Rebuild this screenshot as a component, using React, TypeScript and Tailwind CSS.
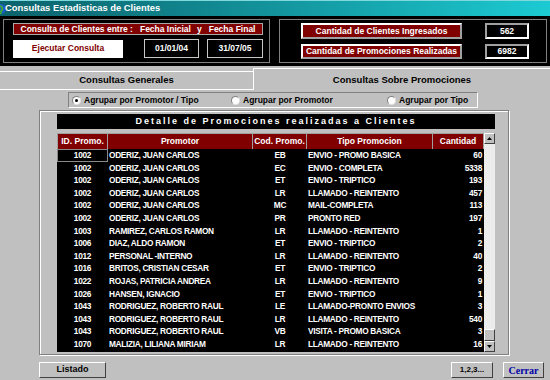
import React from 'react'

const rows: [string, string, string, string, string][] = [
  ['1002', 'ODERIZ, JUAN CARLOS', 'EB', 'ENVIO - PROMO BASICA', '60'],
  ['1002', 'ODERIZ, JUAN CARLOS', 'EC', 'ENVIO - COMPLETA', '5338'],
  ['1002', 'ODERIZ, JUAN CARLOS', 'ET', 'ENVIO - TRIPTICO', '193'],
  ['1002', 'ODERIZ, JUAN CARLOS', 'LR', 'LLAMADO - REINTENTO', '457'],
  ['1002', 'ODERIZ, JUAN CARLOS', 'MC', 'MAIL-COMPLETA', '113'],
  ['1002', 'ODERIZ, JUAN CARLOS', 'PR', 'PRONTO RED', '197'],
  ['1003', 'RAMIREZ, CARLOS RAMON', 'LR', 'LLAMADO - REINTENTO', '1'],
  ['1006', 'DIAZ, ALDO RAMON', 'ET', 'ENVIO - TRIPTICO', '2'],
  ['1012', 'PERSONAL -INTERNO', 'LR', 'LLAMADO - REINTENTO', '40'],
  ['1016', 'BRITOS, CRISTIAN CESAR', 'ET', 'ENVIO - TRIPTICO', '2'],
  ['1022', 'ROJAS, PATRICIA ANDREA', 'LR', 'LLAMADO - REINTENTO', '9'],
  ['1026', 'HANSEN, IGNACIO', 'ET', 'ENVIO - TRIPTICO', '1'],
  ['1043', 'RODRIGUEZ, ROBERTO RAUL', 'LE', 'LLAMADO-PRONTO ENVIOS', '3'],
  ['1043', 'RODRIGUEZ, ROBERTO RAUL', 'LR', 'LLAMADO - REINTENTO', '540'],
  ['1043', 'RODRIGUEZ, ROBERTO RAUL', 'VB', 'VISITA - PROMO BASICA', '3'],
  ['1070', 'MALIZIA, LILIANA MIRIAM', 'LR', 'LLAMADO - REINTENTO', '16'],
]

// column widths + alignment, written out so tailwind picks them up
const cols = [
  'w-[51px] justify-center',
  'w-[145px] justify-start pl-[1px]',
  'w-[54px] justify-center',
  'w-[126px] justify-start pl-[1px]',
  'w-[51px] justify-end pr-[2px]',
]
const headW = ['w-[51px]', 'w-[145px]', 'w-[54px]', 'w-[126px]', 'w-[51px]']

const headers = ['ID. Promo.', 'Promotor', 'Cod. Promo.', 'Tipo Promocion', 'Cantidad']

const raised =
  'border border-t-white border-l-white border-r-[#404040] border-b-[#404040] bg-[#c0c0c0]'

function Radio({ label, checked, width }: { label: string; checked?: boolean; width: string }) {
  return (
    <div className={`flex items-center gap-[3px] whitespace-nowrap ${width}`}>
      <span className="w-[9px] h-[9px] shrink-0 rounded-full bg-white border border-t-[#808080] border-l-[#808080] border-b-[#e0e0e0] border-r-[#e0e0e0] flex items-center justify-center">
        {checked && <span className="w-[3px] h-[3px] rounded-full bg-black" />}
      </span>
      <span className="text-[8.5px] font-bold text-black">{label}</span>
    </div>
  )
}

function Arrow({ up }: { up?: boolean }) {
  return (
    <div className={`h-[11px] flex items-center justify-center ${raised}`}>
      <svg width="5" height="3" viewBox="0 0 5 3">
        <path d={up ? 'M0 3 L2.5 0 L5 3 Z' : 'M0 0 L2.5 3 L5 0 Z'} fill="#000" />
      </svg>
    </div>
  )
}

export default function App() {
  return (
    <div className="w-[550px] h-[380px] overflow-hidden bg-[#c0c0c0] font-['Liberation_Sans',Arial,sans-serif] flex flex-col">
      {/* Title bar */}
      <div className="h-[16px] flex items-center bg-gradient-to-r from-[#0b626b] to-[#1ccad2] border-t border-[#7fd8dc]">
        <svg width="6" height="12" viewBox="0 0 6 12" className="shrink-0">
          <circle cx="1" cy="6" r="5" fill="#1c5bc8" />
          <path d="M0 3 Q3 4 2 7 Q0 9 1 11" stroke="#39a83a" strokeWidth="2" fill="none" />
        </svg>
        <span className="ml-[-1px] text-white font-bold text-[9.4px]">Consultas Estadisticas de Clientes</span>
      </div>

      {/* Black header */}
      <div className="h-[50px] bg-black flex pt-[3px] px-[3px] gap-[9px]">
        <div className="w-[267px] h-[44px] border border-[#808080] pl-[9px] pt-[3px]">
          <div className="w-[250px] h-[12px] bg-[#800000] border border-[#a8a8a8] flex items-center justify-center text-white font-bold text-[8.5px] whitespace-pre">
            <span>Consulta de Clientes entre :</span>
            <span className="ml-[7px]">Fecha Inicial</span>
            <span className="ml-[6px]">y</span>
            <span className="ml-[7px]">Fecha Final</span>
          </div>
          <div className="mt-[4px] flex items-center">
            <div className="w-[110px] h-[18px] bg-white flex items-center justify-center text-[#800000] font-bold text-[8.5px]">
              Ejecutar Consulta
            </div>
            <div className="ml-[21px] w-[55px] h-[19px] border border-[#c8c8c8] flex items-center justify-center text-white font-bold text-[8.5px]">
              01/01/04
            </div>
            <div className="ml-[8px] w-[56px] h-[19px] border border-[#c8c8c8] flex items-center justify-center text-white font-bold text-[8.5px]">
              31/07/05
            </div>
          </div>
        </div>
        <div className="w-[268px] h-[44px] border border-[#808080] pl-[21px] pt-[3px]">
          <div className="flex">
            <div className="w-[161px] h-[16px] bg-[#800000] border-2 border-t-white border-l-white border-b-[#a0a0a0] border-r-[#a0a0a0] flex items-center justify-center text-white font-bold text-[8.5px]">
              Cantidad de Clientes Ingresados
            </div>
            <div className="ml-[23px] w-[44px] h-[16px] border-2 border-t-[#a0a0a0] border-l-[#a0a0a0] border-b-white border-r-white flex items-center justify-center text-white font-bold text-[8.5px]">
              562
            </div>
          </div>
          <div className="flex mt-[5px]">
            <div className="w-[161px] h-[15px] bg-[#800000] border-2 border-t-white border-l-white border-b-[#a0a0a0] border-r-[#a0a0a0] flex items-center justify-center text-white font-bold text-[8.5px]">
              Cantidad de Promociones Realizadas
            </div>
            <div className="ml-[23px] w-[44px] h-[15px] border-2 border-t-[#a0a0a0] border-l-[#a0a0a0] border-b-white border-r-white flex items-center justify-center text-white font-bold text-[8.5px]">
              6982
            </div>
          </div>
        </div>
      </div>

      {/* Tabs */}
      <div className="h-[24px] flex items-end">
        <div className="w-[253px] h-[19px] border-t border-b border-white flex items-center justify-center text-[9.5px] font-bold text-black">
          Consultas Generales
        </div>
        <div className="flex-1 h-[22px] border-t border-l border-white flex items-start justify-center pt-[4px] text-[9.5px] font-bold text-black">
          Consultas Sobre Promociones
        </div>
      </div>

      {/* Radio options */}
      <div className="ml-[68px] mt-[2px] w-[410px] h-[16px] border border-t-[#808080] border-l-[#808080] border-b-white border-r-white flex items-center pl-[3px]">
        <Radio label="Agrupar por Promotor / Tipo" checked width="w-[159px]" />
        <Radio label="Agrupar por Promotor" width="w-[156px]" />
        <Radio label="Agrupar por Tipo" width="w-[88px]" />
      </div>

      {/* Frame */}
      <div className="ml-[39px] mt-[2px] w-[470px] h-[245px] border border-[#808080] shadow-[inset_1px_1px_0_#fff,1px_1px_0_#fff] pl-[17px] pt-[3px]">
        <div className="w-[438px] h-[15px] bg-black flex items-center justify-center text-white font-bold text-[9px] tracking-[2px]">
          Detalle de Promociones realizadas a Clientes
        </div>
        <div className="mt-[4px] w-[438px] h-[219px] bg-black flex">
          <div className="w-[427px]">
            <div className="h-[16px] flex bg-[#800000] border-t border-[#a0a0a0]">
              {headers.map((h, i) => (
                <div
                  key={h}
                  className={`h-full flex items-center justify-center text-white font-bold text-[8.5px] border-r border-[#a0a0a0] ${i === 0 ? 'border-l' : ''} ${headW[i]}`}
                >
                  {h}
                </div>
              ))}
            </div>
            {rows.map((r, ri) => (
              <div key={ri} className="h-[12.6px] flex">
                {r.map((c, ci) => (
                  <div
                    key={ci}
                    className={`h-full flex items-center text-white font-bold text-[8.3px] tracking-[-0.3px] whitespace-nowrap ${cols[ci]} ${ri === 0 && ci === 0 ? 'border border-[#8a8a8a]' : ''}`}
                  >
                    {c}
                  </div>
                ))}
              </div>
            ))}
          </div>
          {/* scrollbar */}
          <div className="w-[11px] h-[219px] flex flex-col bg-[#ececec]">
            <Arrow up />
            <div className="flex-1 flex flex-col justify-end">
              <div className={`h-[12px] ${raised}`} />
            </div>
            <Arrow />
          </div>
        </div>
      </div>

      {/* Bottom buttons */}
      <div className="mt-[7px] flex">
        <div className={`ml-[39px] w-[67px] h-[16px] flex items-center justify-center text-[9px] font-bold text-black ${raised}`}>
          Listado
        </div>
        <div className={`ml-auto w-[42px] h-[16px] flex items-center justify-center text-[8px] font-bold text-black ${raised}`}>
          1,2,3...
        </div>
        <div className={`ml-[10px] mr-[6px] w-[41px] h-[16px] flex items-center justify-center text-[10px] font-bold text-[#0000a8] font-['Liberation_Serif',serif] ${raised}`}>
          Cerrar
        </div>
      </div>
    </div>
  )
}
